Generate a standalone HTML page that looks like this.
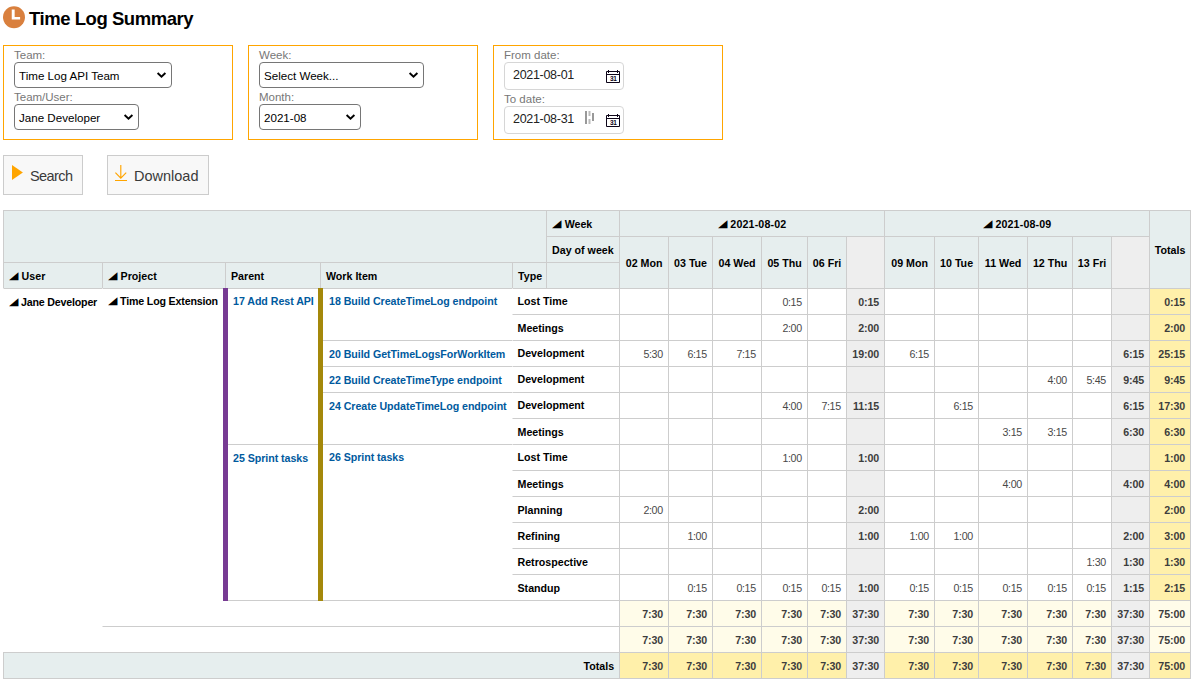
<!DOCTYPE html>
<html lang="en">
<head>
<meta charset="utf-8">
<title>Time Log Summary</title>
<style>
html,body{margin:0;padding:0;background:#fff;}
body{width:1193px;height:683px;overflow:hidden;position:relative;font-family:"Liberation Sans",Arial,sans-serif;color:#000;}
.title{position:absolute;left:3px;top:5px;height:24px;white-space:nowrap;}
.title svg{position:absolute;left:0;top:0;}
.title h1{position:absolute;left:26px;top:2px;margin:0;font-size:18.5px;line-height:24px;font-weight:bold;letter-spacing:-0.45px;color:#000;}
.box{position:absolute;top:45px;width:228px;height:93px;border:1px solid #ffa500;box-sizing:content-box;}
.box label{position:absolute;left:10px;font-size:11.5px;line-height:14px;color:#777;white-space:nowrap;}
.sel{position:absolute;left:10px;height:24px;border:1px solid #767676;border-radius:4px;box-sizing:content-box;background:#fff;font-size:11.6px;line-height:25px;color:#000;white-space:nowrap;letter-spacing:0;}
.sel span{position:absolute;left:4px;top:0;}
.sel svg{position:absolute;right:4px;top:8px;}
.date{position:absolute;left:10px;width:118px;height:26px;border:1px solid #d6d6d6;border-radius:4px;background:#fff;font-size:12.5px;line-height:24px;color:#222;white-space:nowrap;letter-spacing:-0.3px;}
.date span{position:absolute;left:8px;top:0;}
.date svg{position:absolute;}
.btn{position:absolute;top:155px;height:38px;border:1px solid #ccc;background:#f8f8f8;box-sizing:content-box;font-size:14.5px;line-height:38px;color:#3a3a3a;white-space:nowrap;}
.btn span{position:absolute;top:1px;}
.btn svg{position:absolute;}

table.pvt{position:absolute;left:3px;top:210px;width:1188px;table-layout:fixed;border-collapse:separate;border-spacing:0;font-size:10.67px;line-height:13px;border-right:1px solid #cdcdcd;border-bottom:1px solid #cdcdcd;}
table.pvt tr{height:26px;}
table.pvt th,table.pvt td{box-sizing:border-box;height:26px;padding:6px 5px 0 5px;border-left:1px solid #cdcdcd;border-top:1px solid #cdcdcd;overflow:hidden;white-space:nowrap;font-size:10.67px;vertical-align:top;}
table.pvt th{background:#e6eeee;font-weight:bold;text-align:left;color:#000;}
table.pvt td{background:#fff;color:#484848;text-align:right;padding-top:7px;letter-spacing:-0.4px;padding-right:5.4px;}
table.pvt thead th.wk{text-align:center;padding-top:7px;letter-spacing:0.15px;}
table.pvt thead th.day{text-align:center;vertical-align:middle;padding:2px 0 0 0;}
table.pvt thead th.subh{background:#eeeeee;}
table.pvt thead th.gt{text-align:center;vertical-align:middle;padding:2px 0 0 0;}
table.pvt thead th.axis{padding-top:7px;}
.tri{display:inline-block;width:12.6px;text-align:left;font-family:"DejaVu Sans",sans-serif;font-size:11px;line-height:10px;letter-spacing:0;vertical-align:baseline;}
.tri i{display:inline-block;font-style:normal;position:relative;top:-1.4px;transform:scale(1.12,0.95);transform-origin:0 100%;}
table.pvt tbody th.rl{background:#fff;padding-left:4.5px;}
table.pvt tbody th.type{padding-top:7px;border-left-color:#fff;}
table.pvt tbody th.type.first{padding-top:6px;}
table.pvt tbody th.user{border-left-color:#fff;letter-spacing:-0.2px;padding-top:7px;}
table.pvt tbody th.proj{border-left-color:#fff;border-right:2px solid #773b93;letter-spacing:-0.18px;}
table.pvt tbody th.parent{border-left:3px solid #773b93;border-right:2px solid #a4880a;padding-left:5px;}
table.pvt tbody th.witem{border-left:3px solid #a4880a;padding-left:6px;}
table.pvt tbody th.st0{border-left-color:#fff;border-top-color:#fff;}
table.pvt tbody th.st1{position:relative;overflow:visible;border-left-color:#fff;}
table.pvt tbody th.st2{border-left-color:#fff;}
table.pvt tbody th.p1{padding-top:7px;}
.bar{position:absolute;top:288px;width:5px;height:313px;}
table.pvt a{color:#005a9e;text-decoration:none;letter-spacing:-0.05px;}
table.pvt td.sub{background:#eeeeee;color:#3d3d3d;font-weight:bold;letter-spacing:-0.1px;padding-right:5px;}
table.pvt td.tot{background:#fff0aa;color:#3d3d3d;font-weight:bold;letter-spacing:-0.1px;padding-right:5px;}
table.pvt td.st{background:#fffce9;color:#3d3d3d;font-weight:bold;letter-spacing:-0.1px;padding-right:5px;}
table.pvt td.sub.st,table.pvt td.sub.gt{background:#eeeeee;}
table.pvt td.gt{background:#fff0aa;color:#3d3d3d;font-weight:bold;letter-spacing:-0.1px;padding-right:5px;}
table.pvt th.totl{text-align:right;padding-top:7px;}
</style>
</head>
<body>
<div class="title">
<svg width="24" height="24" viewBox="0 0 24 24"><circle cx="11" cy="12.3" r="11" fill="#d9803e"/><path d="M8.75 4.4h2.9v7.6h5.45v2.4h-8.35z" fill="#fff"/></svg>
<h1>Time Log Summary</h1>
</div>

<div class="box" style="left:3px">
<label style="top:2px">Team:</label>
<div class="sel" style="top:16px;width:156px"><span>Time Log API Team</span><svg width="11" height="8" viewBox="0 0 11 8"><path d="M1.6 2l3.9 3.7 3.9-3.7" fill="none" stroke="#000" stroke-width="1.9"/></svg></div>
<label style="top:44px">Team/User:</label>
<div class="sel" style="top:58px;width:123px"><span>Jane Developer</span><svg width="11" height="8" viewBox="0 0 11 8"><path d="M1.6 2l3.9 3.7 3.9-3.7" fill="none" stroke="#000" stroke-width="1.9"/></svg></div>
</div>

<div class="box" style="left:248px">
<label style="top:2px">Week:</label>
<div class="sel" style="top:16px;width:163px"><span>Select Week...</span><svg width="11" height="8" viewBox="0 0 11 8"><path d="M1.6 2l3.9 3.7 3.9-3.7" fill="none" stroke="#000" stroke-width="1.9"/></svg></div>
<label style="top:44px">Month:</label>
<div class="sel" style="top:58px;width:100px"><span>2021-08</span><svg width="11" height="8" viewBox="0 0 11 8"><path d="M1.6 2l3.9 3.7 3.9-3.7" fill="none" stroke="#000" stroke-width="1.9"/></svg></div>
</div>

<div class="box" style="left:493px">
<label style="top:2px">From date:</label>
<div class="date" style="top:16px"><span>2021-08-01</span>
<svg style="left:101px;top:7px" width="14" height="13" viewBox="0 0 14 13"><path d="M0.5 1.5h13v11h-13zM0.5 4.5h13M2.5 0v3M11.5 0v3" fill="none" stroke="#0d0518" stroke-width="1"/><text x="7.2" y="11" font-size="6.5" font-weight="bold" font-family="Liberation Sans, sans-serif" text-anchor="middle" fill="#0d0518">31</text></svg>
</div>
<label style="top:46px">To date:</label>
<div class="date" style="top:60px"><span>2021-08-31</span>
<svg style="left:80px;top:3px" width="10" height="16" viewBox="0 0 10 16"><rect x="0" y="1" width="2" height="13" fill="#999"/><rect x="3.5" y="1" width="2" height="5" fill="#bbb"/><rect x="3.5" y="9" width="2" height="5" fill="#bbb"/><rect x="7" y="3" width="2" height="8" fill="#999"/></svg>
<svg style="left:101px;top:7px" width="14" height="13" viewBox="0 0 14 13"><path d="M0.5 1.5h13v11h-13zM0.5 4.5h13M2.5 0v3M11.5 0v3" fill="none" stroke="#0d0518" stroke-width="1"/><text x="7.2" y="11" font-size="6.5" font-weight="bold" font-family="Liberation Sans, sans-serif" text-anchor="middle" fill="#0d0518">31</text></svg>
</div>
</div>

<div class="btn" style="left:3px;width:78px"><svg style="left:7.8px;top:9px" width="11" height="15" viewBox="0 0 11 15"><path d="M0 0l10.9 7.5L0 15z" fill="#ffa500"/></svg><span style="left:26px;letter-spacing:-0.6px">Search</span></div>
<div class="btn" style="left:107px;width:100px"><svg style="left:6px;top:8px" width="15" height="18" viewBox="0 0 15 18"><path d="M6.8 1V14M1.4 8.7L6.8 14.1L12.2 8.7M1 16.5H13" fill="none" stroke="#ffa500" stroke-width="1.15"/></svg><span style="left:26px">Download</span></div>

<table class="pvt"><colgroup><col style="width:99px"><col style="width:123px"><col style="width:95px"><col style="width:192px"><col style="width:34px"><col style="width:73px"><col style="width:49px"><col style="width:44px"><col style="width:49px"><col style="width:46px"><col style="width:39px"><col style="width:38px"><col style="width:50px"><col style="width:44px"><col style="width:49px"><col style="width:45px"><col style="width:39px"><col style="width:38px"><col style="width:41px"></colgroup>
<thead>
<tr><th class="blank" colspan="5" rowspan="2"></th><th class="axis"><span class="tri"><i>&#9698;</i></span>Week</th><th class="wk" colspan="6"><span class="tri"><i>&#9698;</i></span>2021-08-02</th><th class="wk" colspan="6"><span class="tri"><i>&#9698;</i></span>2021-08-09</th><th class="gt" rowspan="3">Totals</th></tr>
<tr><th class="axis">Day of week</th><th class="day" rowspan="2">02 Mon</th><th class="day" rowspan="2">03 Tue</th><th class="day" rowspan="2">04 Wed</th><th class="day" rowspan="2">05 Thu</th><th class="day" rowspan="2">06 Fri</th><th class="subh" rowspan="2"></th><th class="day" rowspan="2">09 Mon</th><th class="day" rowspan="2">10 Tue</th><th class="day" rowspan="2">11 Wed</th><th class="day" rowspan="2">12 Thu</th><th class="day" rowspan="2">13 Fri</th><th class="subh" rowspan="2"></th></tr>
<tr><th class="axis"><span class="tri"><i>&#9698;</i></span>User</th><th class="axis"><span class="tri"><i>&#9698;</i></span>Project</th><th class="axis">Parent</th><th class="axis">Work Item</th><th class="axis">Type</th><th class="blank"></th></tr>
</thead>
<tbody>
<tr><th class="rl user" rowspan="14"><span class="tri"><i>&#9698;</i></span>Jane Developer</th><th class="rl proj" rowspan="12"><span class="tri"><i>&#9698;</i></span>Time Log Extension</th><th class="rl parent" rowspan="6"><a>17 Add Rest API</a></th><th class="rl witem" rowspan="2"><a>18 Build CreateTimeLog endpoint</a></th><th class="rl type first" colspan="2">Lost Time</th><td class="val"></td><td class="val"></td><td class="val"></td><td class="val">0:15</td><td class="val"></td><td class="sub">0:15</td><td class="val"></td><td class="val"></td><td class="val"></td><td class="val"></td><td class="val"></td><td class="sub"></td><td class="tot">0:15</td></tr>
<tr><th class="rl type" colspan="2">Meetings</th><td class="val"></td><td class="val"></td><td class="val"></td><td class="val">2:00</td><td class="val"></td><td class="sub">2:00</td><td class="val"></td><td class="val"></td><td class="val"></td><td class="val"></td><td class="val"></td><td class="sub"></td><td class="tot">2:00</td></tr>
<tr><th class="rl witem p1" rowspan="1"><a>20 Build GetTimeLogsForWorkItem</a></th><th class="rl type first" colspan="2">Development</th><td class="val">5:30</td><td class="val">6:15</td><td class="val">7:15</td><td class="val"></td><td class="val"></td><td class="sub">19:00</td><td class="val">6:15</td><td class="val"></td><td class="val"></td><td class="val"></td><td class="val"></td><td class="sub">6:15</td><td class="tot">25:15</td></tr>
<tr><th class="rl witem p1" rowspan="1"><a>22 Build CreateTimeType endpoint</a></th><th class="rl type first" colspan="2">Development</th><td class="val"></td><td class="val"></td><td class="val"></td><td class="val"></td><td class="val"></td><td class="sub"></td><td class="val"></td><td class="val"></td><td class="val"></td><td class="val">4:00</td><td class="val">5:45</td><td class="sub">9:45</td><td class="tot">9:45</td></tr>
<tr><th class="rl witem p1" rowspan="2"><a>24 Create UpdateTimeLog endpoint</a></th><th class="rl type first" colspan="2">Development</th><td class="val"></td><td class="val"></td><td class="val"></td><td class="val">4:00</td><td class="val">7:15</td><td class="sub">11:15</td><td class="val"></td><td class="val">6:15</td><td class="val"></td><td class="val"></td><td class="val"></td><td class="sub">6:15</td><td class="tot">17:30</td></tr>
<tr><th class="rl type" colspan="2">Meetings</th><td class="val"></td><td class="val"></td><td class="val"></td><td class="val"></td><td class="val"></td><td class="sub"></td><td class="val"></td><td class="val"></td><td class="val">3:15</td><td class="val">3:15</td><td class="val"></td><td class="sub">6:30</td><td class="tot">6:30</td></tr>
<tr><th class="rl parent p1" rowspan="6"><a>25 Sprint tasks</a></th><th class="rl witem" rowspan="6"><a>26 Sprint tasks</a></th><th class="rl type first" colspan="2">Lost Time</th><td class="val"></td><td class="val"></td><td class="val"></td><td class="val">1:00</td><td class="val"></td><td class="sub">1:00</td><td class="val"></td><td class="val"></td><td class="val"></td><td class="val"></td><td class="val"></td><td class="sub"></td><td class="tot">1:00</td></tr>
<tr><th class="rl type" colspan="2">Meetings</th><td class="val"></td><td class="val"></td><td class="val"></td><td class="val"></td><td class="val"></td><td class="sub"></td><td class="val"></td><td class="val"></td><td class="val">4:00</td><td class="val"></td><td class="val"></td><td class="sub">4:00</td><td class="tot">4:00</td></tr>
<tr><th class="rl type" colspan="2">Planning</th><td class="val">2:00</td><td class="val"></td><td class="val"></td><td class="val"></td><td class="val"></td><td class="sub">2:00</td><td class="val"></td><td class="val"></td><td class="val"></td><td class="val"></td><td class="val"></td><td class="sub"></td><td class="tot">2:00</td></tr>
<tr><th class="rl type" colspan="2">Refining</th><td class="val"></td><td class="val">1:00</td><td class="val"></td><td class="val"></td><td class="val"></td><td class="sub">1:00</td><td class="val">1:00</td><td class="val">1:00</td><td class="val"></td><td class="val"></td><td class="val"></td><td class="sub">2:00</td><td class="tot">3:00</td></tr>
<tr><th class="rl type" colspan="2">Retrospective</th><td class="val"></td><td class="val"></td><td class="val"></td><td class="val"></td><td class="val"></td><td class="sub"></td><td class="val"></td><td class="val"></td><td class="val"></td><td class="val"></td><td class="val">1:30</td><td class="sub">1:30</td><td class="tot">1:30</td></tr>
<tr><th class="rl type" colspan="2">Standup</th><td class="val"></td><td class="val">0:15</td><td class="val">0:15</td><td class="val">0:15</td><td class="val">0:15</td><td class="sub">1:00</td><td class="val">0:15</td><td class="val">0:15</td><td class="val">0:15</td><td class="val">0:15</td><td class="val">0:15</td><td class="sub">1:15</td><td class="tot">2:15</td></tr>
<tr><th class="rl st0"></th><th class="rl st1" colspan="4"></th><td class="val st">7:30</td><td class="val st">7:30</td><td class="val st">7:30</td><td class="val st">7:30</td><td class="val st">7:30</td><td class="sub st">37:30</td><td class="val st">7:30</td><td class="val st">7:30</td><td class="val st">7:30</td><td class="val st">7:30</td><td class="val st">7:30</td><td class="sub st">37:30</td><td class="tot st">75:00</td></tr>
<tr><th class="rl st2" colspan="5"></th><td class="val st">7:30</td><td class="val st">7:30</td><td class="val st">7:30</td><td class="val st">7:30</td><td class="val st">7:30</td><td class="sub st">37:30</td><td class="val st">7:30</td><td class="val st">7:30</td><td class="val st">7:30</td><td class="val st">7:30</td><td class="val st">7:30</td><td class="sub st">37:30</td><td class="tot st">75:00</td></tr>
<tr><th class="totl" colspan="6">Totals</th><td class="val gt">7:30</td><td class="val gt">7:30</td><td class="val gt">7:30</td><td class="val gt">7:30</td><td class="val gt">7:30</td><td class="sub gt">37:30</td><td class="val gt">7:30</td><td class="val gt">7:30</td><td class="val gt">7:30</td><td class="val gt">7:30</td><td class="val gt">7:30</td><td class="sub gt">37:30</td><td class="tot gt">75:00</td></tr>
</tbody></table>
<div class="bar" style="left:223px;background:#773b93"></div><div class="bar" style="left:318px;background:#a4880a"></div>
</body>
</html>
